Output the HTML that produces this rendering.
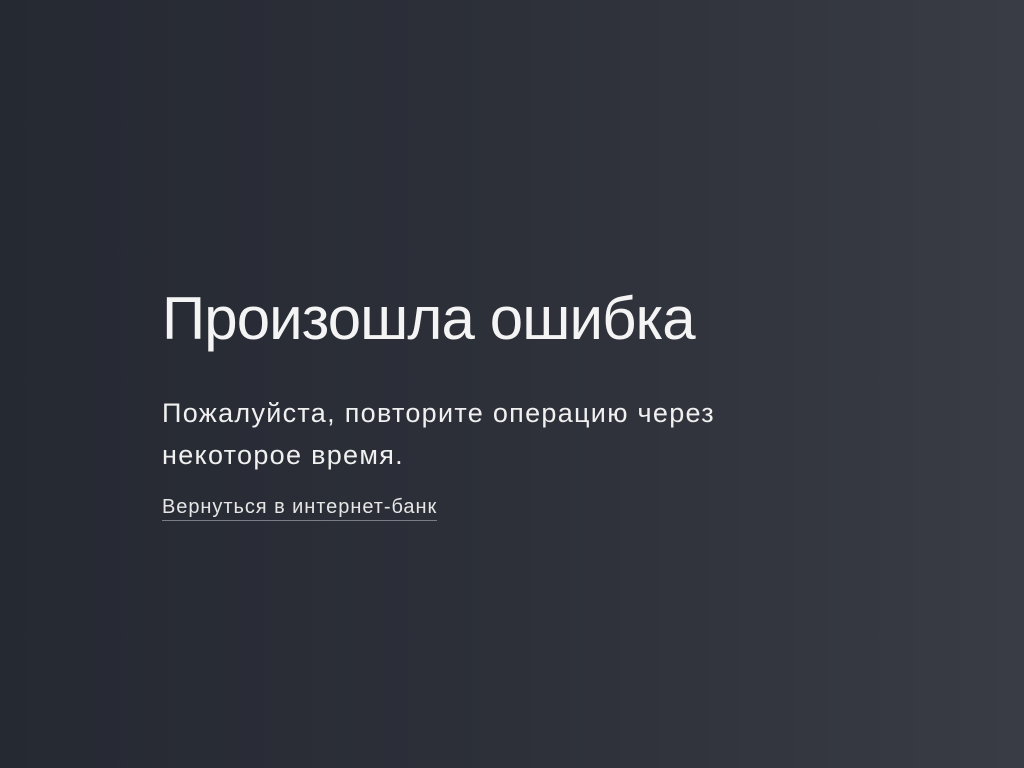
<!DOCTYPE html>
<html><head><meta charset="utf-8"><style>
html,body{margin:0;height:100%}
body{width:1024px;height:768px;overflow:hidden;background:linear-gradient(90deg,#252932 0%,#2d3039 50%,#393c44 100%);font-family:"Liberation Sans",sans-serif;color:#fff}
h1{position:absolute;left:162px;top:284px;margin:0;font-weight:300;font-size:60px;line-height:70px;letter-spacing:-0.9px;color:#f4f4f4}
p{position:absolute;left:162px;top:392px;margin:0;font-size:27px;line-height:42px;width:700px;letter-spacing:1.3px;color:#f0f0f0}
a{position:absolute;left:162px;top:494px;font-size:20px;line-height:26px;letter-spacing:0.95px;color:#e6e6e6;text-decoration:none;border-bottom:1px solid #7a7d84}
</style></head><body>
<h1>Произошла ошибка</h1>
<p>Пожалуйста, повторите операцию через<br>некоторое время.</p>
<a href="#">Вернуться в интернет-банк</a>
</body></html>
